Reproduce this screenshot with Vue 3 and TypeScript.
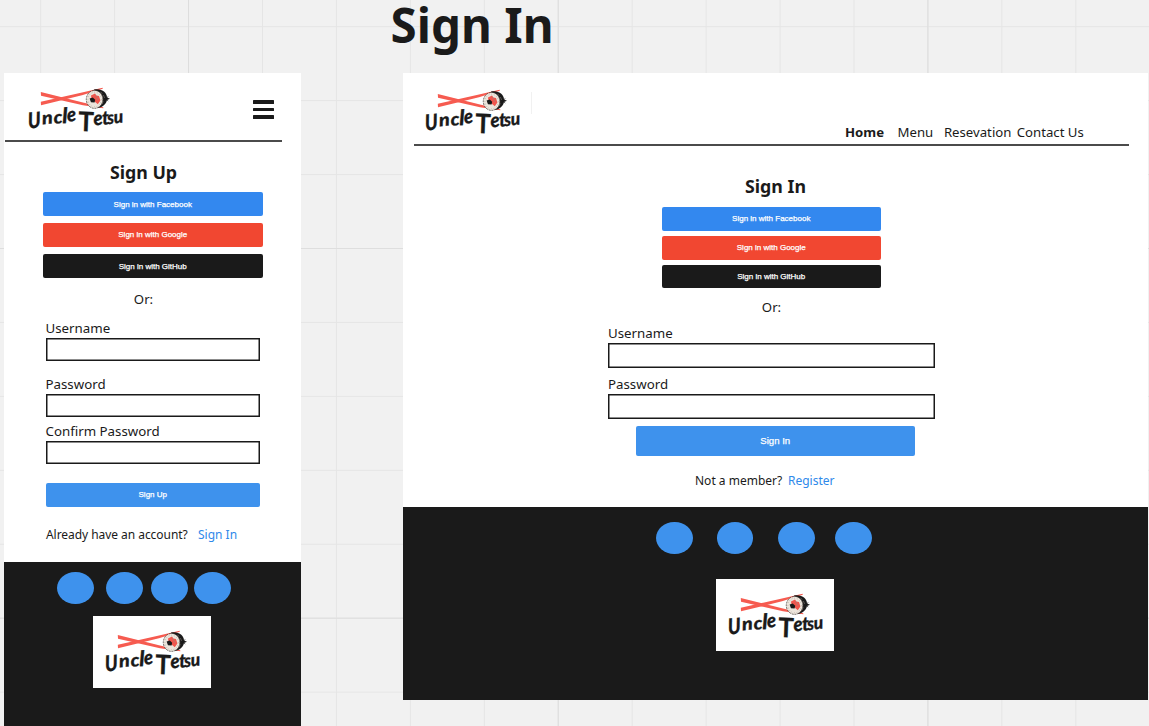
<script setup lang="ts">
import { defineComponent, h } from 'vue'

interface Glyph { c: string; x: number; y: number; s: number; r: number; w: number; upright?: boolean }

const glyphs: Glyph[] = [
  { c: 'U', x: 12.4, y: 55.4, s: 22, r: -5, w: 0.84 },
  { c: 'n', x: 26.4, y: 51.6, s: 18, r: -6, w: 1.1 },
  { c: 'c', x: 38, y: 50.8, s: 18, r: -4, w: 1.08 },
  { c: 'l', x: 46.6, y: 50.2, s: 21.5, r: -2, w: 1 },
  { c: 'e', x: 51.4, y: 48.8, s: 20, r: -6, w: 0.94 },
  { c: 'T', x: 62, y: 58, s: 27, r: 2, w: 0.96, upright: true },
  { c: 'e', x: 78, y: 52.4, s: 20, r: -6, w: 0.95 },
  { c: 't', x: 86.4, y: 51.8, s: 19.5, r: -4, w: 0.95 },
  { c: 's', x: 91.8, y: 51.2, s: 18, r: -6, w: 0.92 },
  { c: 'u', x: 98.2, y: 50.5, s: 18, r: -6, w: 0.97 },
]

const ink = '#1a1a1a'
const red = '#f65b50'

const BrandLogo = defineComponent({
  name: 'BrandLogo',
  setup() {
    return () =>
      h('svg', { width: 118, height: 72, viewBox: '0 0 118 72' }, [
        h('path', { d: 'M24.8 19 L25 22.8 L67 32.2 L87.4 35.3 L87.2 34.2 L68 29.8 Z', fill: red }),
        h('path', { d: 'M24.8 28.7 L25 32.2 L66 22.3 L86.8 15.8 L86.6 14.7 L66 19.6 Z', fill: red }),
        h('path', { d: 'M78 16.6 C86 15.2 91 20 91 24.4 L94 25.8 L91 27 C90 32 85 35.6 79 35 Z', fill: ink }),
        h('path', { d: 'M90.8 24.6 L92.3 23.6 M91 27 L92.2 28', stroke: ink, 'stroke-width': 0.7 }),
        h('ellipse', { cx: 78.6, cy: 26.4, rx: 8.3, ry: 9, fill: '#ece5dc', stroke: '#4a423d', 'stroke-width': 0.8, 'stroke-dasharray': '2 .9' }),
        h('ellipse', { cx: 78.6, cy: 26.5, rx: 6.7, ry: 7.3, fill: 'none', stroke: '#a3978d', 'stroke-width': 0.6, 'stroke-dasharray': '.8 1.9' }),
        h('path', { d: 'M75 22.6 L79 20.6 L80.4 22.6 L83 23 L84.4 27.5 L81.8 31.3 L78.5 28.6 L75.5 26 Z', fill: '#f0564d' }),
        h('path', { d: 'M73.6 25.4 L76.8 24.6 L79.2 26.8 L78.6 29.6 L75 29.3 Z', fill: ink }),
        h('path', { d: 'M79.5 22 L82 27 M84.5 19 L86.4 20.4 M87.4 22 L88.6 25 M87.2 28 L86.2 31', stroke: '#8f8780', 'stroke-width': 0.5 }),
        h(
          'g',
          { 'font-family': "'Lato', sans-serif", fill: ink, stroke: ink, 'stroke-width': 0.25 },
          glyphs.map((g) =>
            h(
              'text',
              {
                'font-size': g.s,
                'font-style': g.upright ? 'normal' : 'italic',
                'font-weight': g.upright ? 700 : 900,
                transform: `translate(${g.x} ${g.y}) rotate(${g.r}) scale(${g.w} 1)`,
              },
              g.c,
            ),
          ),
        ),
      ])
  },
})

const providers = [
  { name: 'Facebook', tone: 'facebook' },
  { name: 'Google', tone: 'google' },
  { name: 'GitHub', tone: 'github' },
]
const nav = ['Home', 'Menu', 'Resevation', 'Contact Us']
</script>

<template>
  <main class="canvas">
    <h1 class="title">Sign In</h1>
    <div class="boards">
      <section class="board mobile">
        <header class="head">
          <BrandLogo />
          <button class="burger" aria-label="Open navigation"><i></i><i></i><i></i></button>
        </header>
        <h2>Sign Up</h2>
        <div class="providers">
          <button v-for="p in providers" :key="p.name" :class="['btn', p.tone]">Sign in with {{ p.name }}</button>
        </div>
        <p class="or">Or:</p>
        <div class="form">
          <label>Username<input type="text" /></label>
          <label>Password<input type="password" /></label>
          <label>Confirm Password<input type="password" /></label>
          <button class="btn submit">Sign Up</button>
        </div>
        <p class="switch"><span class="ask">Already have an account?</span><a>Sign In</a></p>
        <footer>
          <div class="social"><i v-for="n in 4" :key="n"></i></div>
          <div class="card"><BrandLogo /></div>
        </footer>
      </section>

      <section class="board desktop">
        <header class="head">
          <BrandLogo />
          <span class="tick"></span>
          <nav><a v-for="item in nav" :key="item">{{ item }}</a></nav>
        </header>
        <h2>Sign In</h2>
        <div class="providers">
          <button v-for="p in providers" :key="p.name" :class="['btn', p.tone]">Sign in with {{ p.name }}</button>
        </div>
        <p class="or">Or:</p>
        <div class="form">
          <label>Username<input type="text" /></label>
          <label>Password<input type="password" /></label>
          <button class="btn submit">Sign In</button>
        </div>
        <p class="switch"><span class="ask">Not a member?</span><a>Register</a></p>
        <footer>
          <div class="social"><i v-for="n in 4" :key="n"></i></div>
          <div class="card"><BrandLogo /></div>
        </footer>
      </section>
    </div>
  </main>
</template>

<style>
body { margin: 0; overflow: hidden; }
</style>

<style scoped>
* { box-sizing: border-box; }
.canvas {
  width: 1149px;
  height: 726px;
  font-family: 'Noto Sans', sans-serif;
  color: #1a1a1a;
  background-color: #f1f1f1;
  background-image:
    linear-gradient(90deg, #dddddd 1px, transparent 1px),
    linear-gradient(#dedede 1px, transparent 1px),
    linear-gradient(90deg, #e5e5e5 1px, transparent 1px),
    linear-gradient(#e5e5e5 1px, transparent 1px);
  background-size: 369.7px 100%, 100% 369.7px, 73.94px 100%, 100% 73.94px;
  background-position: 188px 0, 0 248px, 40.2px 0, 0 26.2px;
}
h1, h2, p { margin: 0; }
.title { height: 73px; padding-left: 390.6px; font-size: 47.5px; line-height: 50px; font-weight: 700; white-space: nowrap; }
.boards { display: flex; align-items: flex-start; gap: 102px; padding-left: 4px; }
.board { background: #fff; display: flex; flex-direction: column; flex: none; }
.mobile { width: 297px; height: 653px; }
.desktop { width: 745px; height: 627px; }
.head { display: flex; align-items: flex-start; flex: none; }
.head svg { flex: none; }
.mobile .head { height: 69px; width: 277px; margin-left: 1px; padding-left: 11px; border-bottom: 2px solid #4b4b4b; }
.desktop .head { height: 73px; width: 715px; margin-left: 11px; padding-top: 2px; border-bottom: 2px solid #4b4b4b; }
.desktop .head svg { margin-left: -1px; }
.burger { display: flex; flex-direction: column; gap: 4px; margin: 27px 0 0 119px; padding: 0; border: 0; background: none; width: 21px; }
.burger i { height: 3.5px; background: #1a1a1a; border-radius: 0.5px; }
.tick { width: 1px; height: 22px; margin-top: 17px; background: #f1f1f1; }
nav { display: flex; margin: 47px 0 0 313px; font-size: 13.2px; line-height: 20px; white-space: nowrap; }
nav a { flex: none; }
nav a:nth-child(1) { width: 52.5px; font-weight: 700; }
nav a:nth-child(2) { width: 46.4px; }
nav a:nth-child(3) { width: 72.8px; }
h2 { font-size: 17.8px; line-height: 24px; font-weight: 700; text-align: center; flex: none; }
.mobile h2 { width: 279px; margin-top: 18px; }
.desktop h2 { margin-top: 28px; }
.providers { display: flex; flex-direction: column; width: 219.5px; flex: none; }
.mobile .providers { margin: 8.3px 0 0 39px; gap: 7.2px; }
.desktop .providers { margin: 9px 0 0 258.5px; gap: 5px; }
.btn {
  height: 23.8px;
  padding: 0;
  border: 0;
  border-radius: 2px;
  color: #fff;
  font: 8px/1 'Liberation Sans', Arial, sans-serif;
  -webkit-text-stroke: 0.25px #fff;
  flex: none;
}
.mobile .facebook, .mobile .github, .desktop .github { padding-top: 1px; }
.facebook { background: #3388ef; }
.google { background: #f14731; }
.github { background: #1a1a1a; }
.submit { background: #3e92ed; }
.or { font-size: 13.2px; line-height: 20px; text-align: center; flex: none; }
.mobile .or { width: 279px; margin-top: 10.7px; }
.desktop .or { margin-top: 9px; width: 737px; }
.form { display: flex; flex-direction: column; flex: none; font-size: 13.3px; line-height: 20px; }
label { display: flex; flex-direction: column; flex: none; }
input { display: block; border: 1px solid #1a1a1a; border-radius: 0; padding: 0; background: #fff; box-shadow: inset 0 0 0 0.5px #1a1a1a; }
.mobile .form { width: 214.5px; margin: 9px 0 0 41.5px; }
.mobile input { width: 214.5px; height: 23px; }
.mobile label:nth-of-type(2) { margin-top: 13px; }
.mobile label:nth-of-type(3) { margin-top: 4px; }
.mobile .submit { margin-top: 19.5px; }
.desktop .form { width: 327px; margin: 6px 0 0 205px; }
.desktop input { width: 326.6px; height: 25px; }
.desktop label:nth-of-type(2) { margin-top: 6px; }
.desktop .submit { width: 278.5px; height: 30px; margin: 6.4px 0 0 28px; font-size: 9.6px; }
.switch { display: flex; font-size: 12px; line-height: 20px; white-space: nowrap; flex: none; }
.switch a { color: #2f89ea; }
.mobile .switch { margin: 18px 0 0 42px; }
.mobile .ask { width: 152px; letter-spacing: -0.05px; }
.desktop .switch { margin: 15.3px 0 0 292px; }
.desktop .ask { width: 93px; }
footer { background: #1a1a1a; flex: 1; }
.mobile footer { margin-top: 17px; padding-top: 10px; }
.desktop footer { margin-top: 15.5px; padding-top: 15.5px; }
.social { display: flex; }
.social i { width: 36.7px; height: 32.3px; border-radius: 50%; background: #3e92ed; flex: none; }
.mobile .social { margin-left: 53px; }
.mobile .social i:nth-child(2) { margin-left: 12.4px; }
.mobile .social i:nth-child(3) { margin-left: 8.4px; }
.mobile .social i:nth-child(4) { margin-left: 6.5px; }
.desktop .social { margin-left: 253px; }
.desktop .social i:nth-child(2) { margin-left: 24px; }
.desktop .social i:nth-child(3) { margin-left: 24.8px; }
.desktop .social i:nth-child(4) { margin-left: 20px; }
.card { width: 118px; height: 72px; background: #fff; }
.card svg { display: block; }
.mobile .card { margin: 11.7px 0 0 89px; }
.desktop .card { margin: 24.2px 0 0 313px; }
</style>
